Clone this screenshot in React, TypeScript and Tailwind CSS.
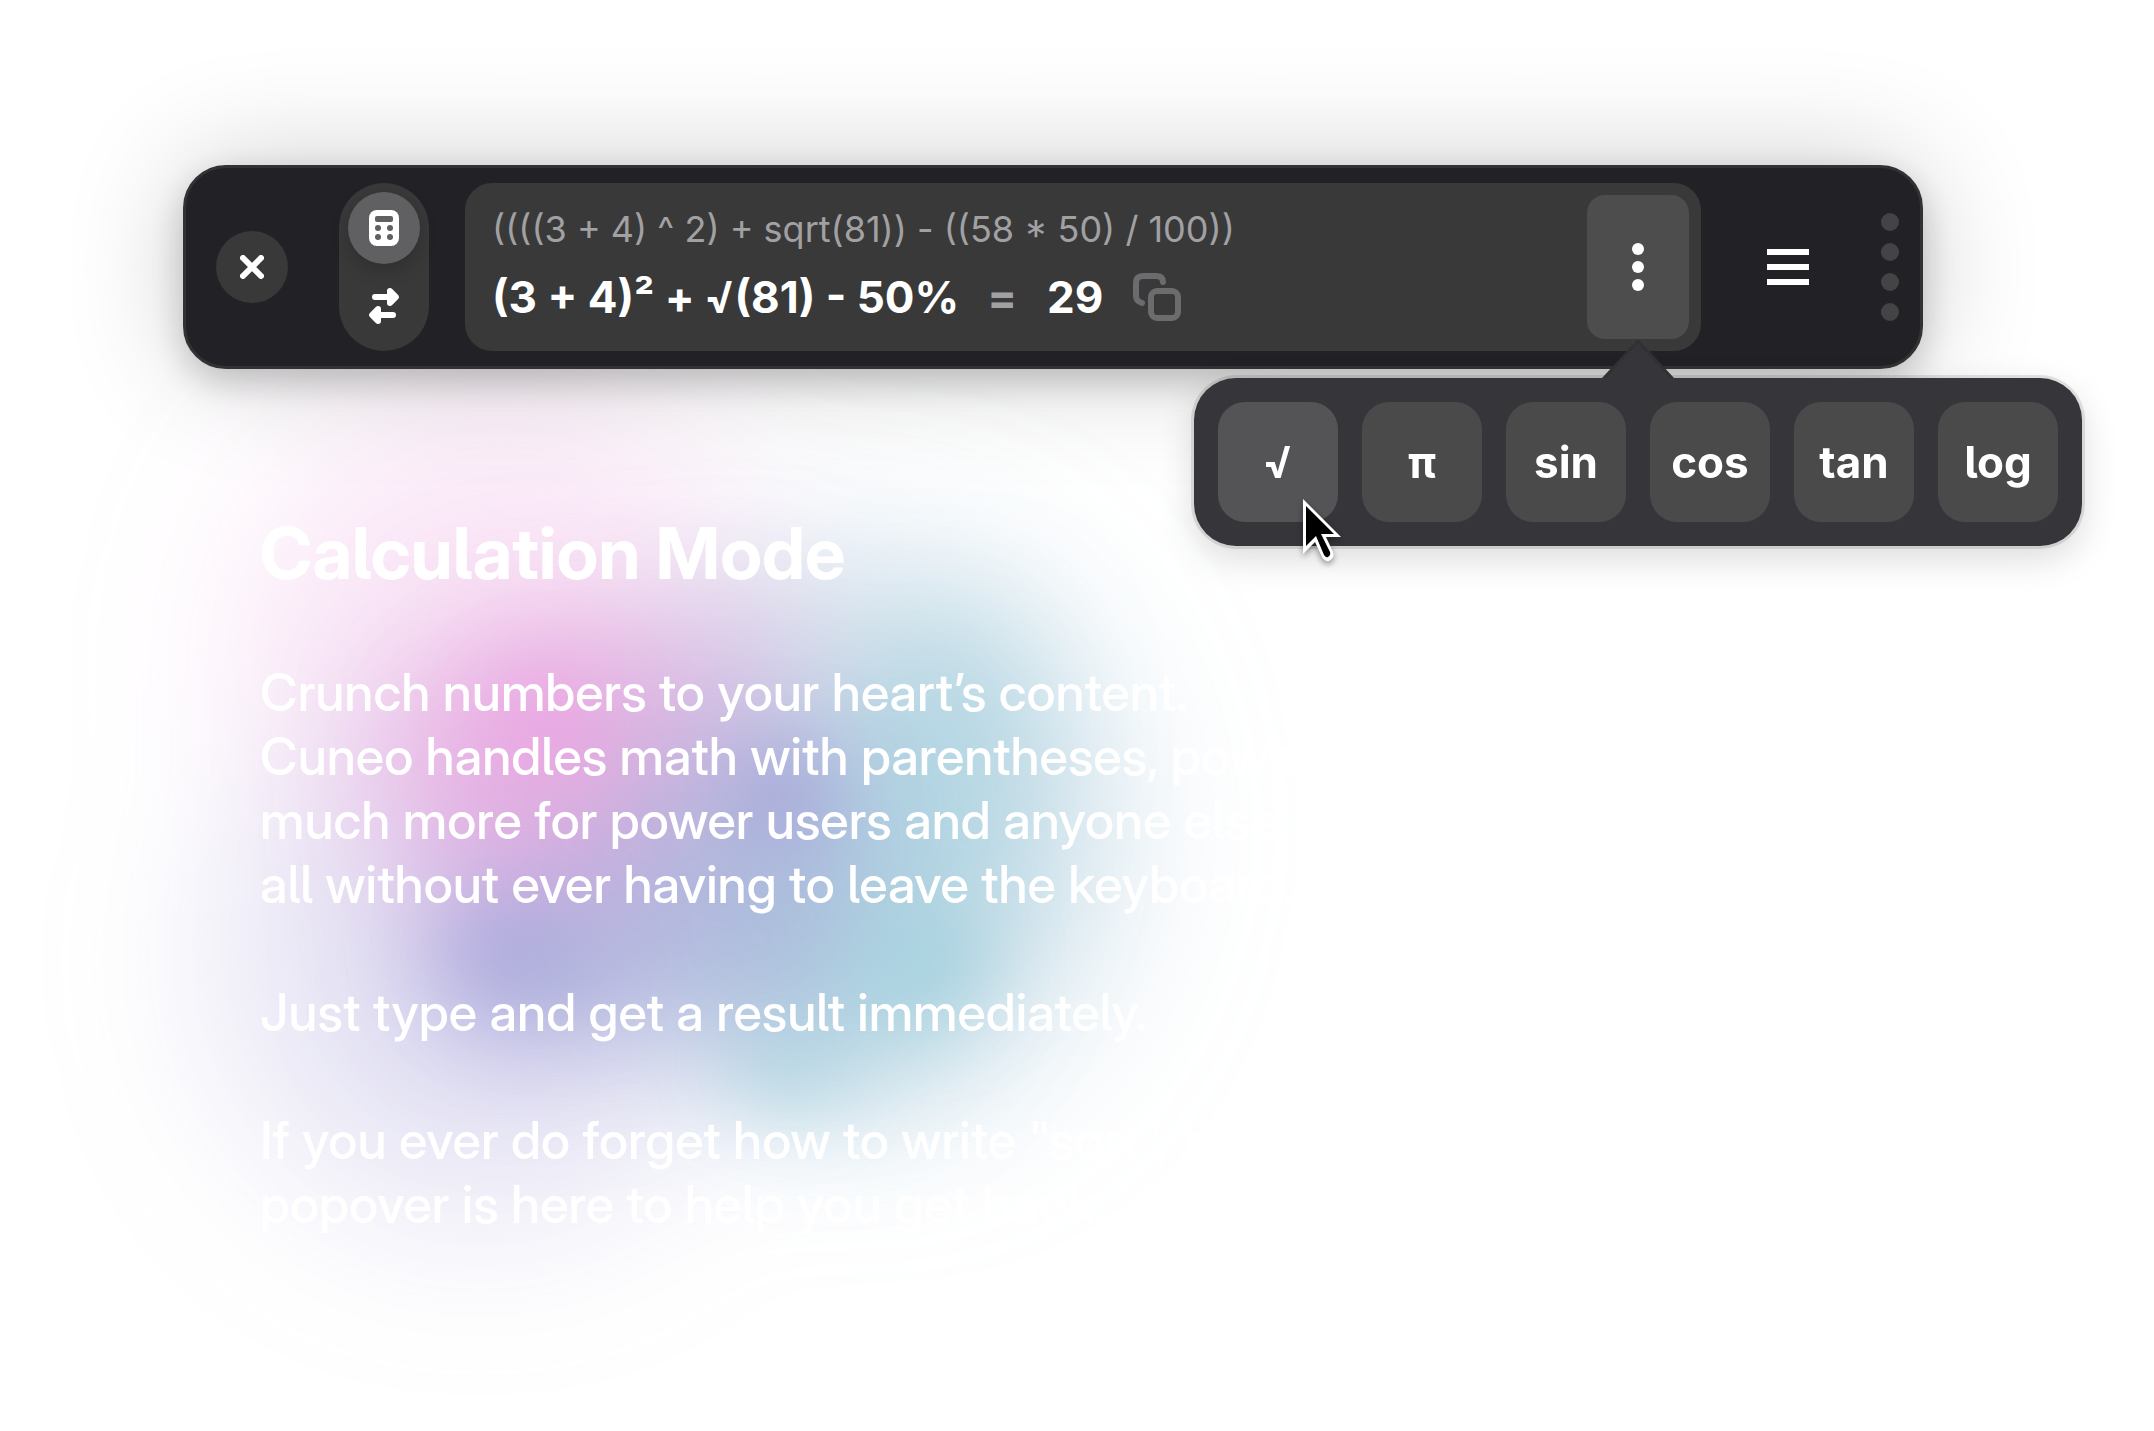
import React from "react";

const functions = [
  { label: "√", name: "Square root" },
  { label: "π", name: "Pi" },
  { label: "sin", name: "Sine" },
  { label: "cos", name: "Cosine" },
  { label: "tan", name: "Tangent" },
  { label: "log", name: "Logarithm" },
];

function CloseIcon() {
  return (
    <svg width="24" height="24" viewBox="0 0 24 24" aria-hidden="true">
      <path d="M3 3L21 21M21 3L3 21" stroke="#fff" strokeWidth="6" strokeLinecap="round" />
    </svg>
  );
}

function CalculatorIcon() {
  return (
    <svg width="30" height="36" viewBox="0 0 30 36" aria-hidden="true">
      <rect width="30" height="36" rx="8" fill="#fff" />
      <g fill="#606062">
        <rect x="6" y="6" width="18" height="6" rx="2" />
        <circle cx="9" cy="18" r="3" />
        <circle cx="21" cy="18" r="3" />
        <circle cx="9" cy="27" r="3" />
        <circle cx="21" cy="27" r="3" />
      </g>
    </svg>
  );
}

function ConvertIcon() {
  return (
    <svg width="30" height="36" viewBox="0 0 30 36" fill="#fff" aria-hidden="true">
      <path d="M6 6H18V3Q18 0 21 0Q22.300 0 23.200 .9L29.100 6.900Q30.900 9 29.100 11.100L23.200 17.100Q22.300 18 21 18Q18 18 18 15V12H6Q3 12 3 9Q3 6 6 6Z" />
      <path d="M24 24H12V21Q12 18 9 18Q7.700 18 6.800 18.900L.9 24.900Q-.9 27 .9 29.100L6.800 35.100Q7.700 36 9 36Q12 36 12 33V30H24Q27 30 27 27Q27 24 24 24Z" />
    </svg>
  );
}

function CopyIcon() {
  return (
    <svg width="48" height="48" viewBox="0 0 48 48" fill="none" stroke="#6c6c6e" strokeWidth="6" aria-hidden="true">
      <rect x="18" y="18" width="27" height="27" rx="6" />
      <path d="M9 30Q3 28 3 23V10Q3 3 10 3H23Q30 3 30 9" strokeLinecap="round" />
    </svg>
  );
}

function MenuIcon() {
  return (
    <svg width="42" height="36" viewBox="0 0 42 36" fill="#fff" aria-hidden="true">
      <path d="M0 0H42V6H0ZM0 15H42V21H0ZM0 30H42V36H0Z" />
    </svg>
  );
}

function Cursor() {
  return (
    <svg
      className="pointer-events-none absolute top-[114px] left-[105px] z-10 drop-shadow-[0_3px_3px_rgba(0,0,0,0.4)]"
      width="44"
      height="74"
      viewBox="0 0 44 74"
      aria-hidden="true"
    >
      <path d="M4 7V62L16 50L23 65Q26 70 30 69Q36 66 34 60L27 45H42Z" fill="#fff" />
      <path d="M7 14V54L17 44L25 63Q27 66 29 65Q32 63 31 60L22 42H35Z" fill="#000" />
    </svg>
  );
}

function Glow() {
  return (
    <svg
      className="absolute top-0 left-0"
      width="1400"
      height="1431"
      viewBox="0 0 1400 1431"
      aria-hidden="true"
    >
      <defs>
        <filter id="wide" x="-50%" y="-50%" width="200%" height="200%">
          <feGaussianBlur stdDeviation="80" />
        </filter>
        <filter id="soft" x="-60%" y="-60%" width="220%" height="220%">
          <feGaussianBlur stdDeviation="62" />
        </filter>
        <filter id="core" x="-80%" y="-80%" width="260%" height="260%">
          <feGaussianBlur stdDeviation="38" />
        </filter>
      </defs>
      <g filter="url(#wide)">
        <ellipse cx="500" cy="650" rx="260" ry="250" fill="#f0aee4" opacity="0.3" />
        <ellipse cx="480" cy="960" rx="270" ry="270" fill="#aca6dc" opacity="0.28" />
        <ellipse cx="860" cy="830" rx="260" ry="280" fill="#a2c6da" opacity="0.48" />
      </g>
      <g filter="url(#soft)">
        <ellipse cx="560" cy="760" rx="170" ry="150" fill="#e79bdc" opacity="0.65" />
        <ellipse cx="890" cy="860" rx="120" ry="250" transform="rotate(20 890 860)" fill="#9ccbdc" opacity="0.62" />
        <ellipse cx="530" cy="960" rx="130" ry="100" fill="#a09cd8" opacity="0.6" />
        <ellipse cx="730" cy="880" rx="130" ry="160" fill="#a6b0d8" opacity="0.7" />
        <ellipse cx="735" cy="680" rx="80" ry="90" fill="#d8b8e4" opacity="0.55" />
      </g>
      <g filter="url(#core)">
        <circle cx="545" cy="725" r="50" fill="#eca0e2" opacity="0.7" />
        <circle cx="785" cy="795" r="55" fill="#a4a2d8" opacity="0.7" />
        <circle cx="505" cy="955" r="55" fill="#a3a3d8" opacity="0.6" />
        <circle cx="570" cy="970" r="45" fill="#a3b0d6" opacity="0.5" />
        <ellipse cx="920" cy="965" rx="65" ry="55" fill="#a4d1df" opacity="0.8" />
        <ellipse cx="785" cy="1065" rx="50" ry="40" fill="#a4d1df" opacity="0.6" />
      </g>
    </svg>
  );
}

function Popover() {
  return (
    <div className="absolute top-[183px] right-[-393px] flex gap-6 rounded-[42px] bg-[#36353a] p-6 shadow-[0_0_0_3px_rgba(0,0,0,0.1),0_12px_36px_rgba(0,0,0,0.15)]">
      <div className="absolute top-[-39px] left-[408px] h-[39px] w-[72px]">
        <svg width="72" height="39" viewBox="0 0 72 39" aria-hidden="true">
          <path d="M0 39L36 0L72 39Z" fill="#313133" />
          <path d="M4 39L36 4L68 39Z" fill="#36353a" />
        </svg>
      </div>
      {functions.map((fn, i) => (
        <button
          key={fn.label}
          type="button"
          aria-label={fn.name}
          className={
            i === 0
              ? "size-[120px] rounded-[27px] bg-[#545456] text-[44px] font-bold text-white"
              : "size-[120px] rounded-[27px] bg-[#4a4a4b] text-[44px] font-bold text-white"
          }
        >
          {fn.label}
        </button>
      ))}
      <Cursor />
    </div>
  );
}

function Toolbar() {
  return (
    <header className="relative z-10 flex items-center rounded-[43px] border-3 border-[#323233] bg-[#222125] p-[15px] shadow-[0_0_120px_rgba(0,0,0,0.2),0_12px_36px_rgba(0,0,0,0.2)]">
      <button
        type="button"
        aria-label="Close"
        className="ml-[15px] flex size-[72px] items-center justify-center rounded-full bg-[#39393a]"
      >
        <CloseIcon />
      </button>

      <div className="ml-[51px] flex flex-col gap-[9px] rounded-full bg-[#39393a] p-[9px] pb-3">
        <button
          type="button"
          aria-label="Calculate"
          className="flex size-[72px] items-center justify-center rounded-full bg-[#606062] shadow-[0_6px_18px_rgba(0,0,0,0.2)]"
        >
          <CalculatorIcon />
        </button>
        <button type="button" aria-label="Convert" className="flex h-[66px] w-[72px] items-center justify-center">
          <ConvertIcon />
        </button>
      </div>

      <section className="ml-9 flex h-[168px] grow items-center justify-between rounded-[27px] bg-[#39393a] pr-3 pl-[27px]">
        <div>
          <p className="text-[36px] leading-[60px] whitespace-nowrap text-[#a1a1a3]">
            ((((3 + 4) ^ 2) + sqrt(81)) - ((58 * 50) / 100))
          </p>
          <div className="flex items-center text-[44px] leading-[76px] font-bold whitespace-nowrap text-white">
            <span>(3 + 4)² + √(81) - 50%</span>
            <span className="ml-7 text-[#a1a1a3]">=</span>
            <output className="ml-[30px]">29</output>
            <button type="button" aria-label="Copy result" className="ml-[30px]">
              <CopyIcon />
            </button>
          </div>
        </div>
        <div className="relative">
          <button
            type="button"
            aria-label="More functions"
            aria-expanded="true"
            className="flex h-[144px] w-[102px] flex-col items-center justify-center gap-1.5 rounded-[18px] bg-[#4d4d4e]"
          >
            <span className="size-3 rounded-full bg-white" />
            <span className="size-3 rounded-full bg-white" />
            <span className="size-3 rounded-full bg-white" />
          </button>
          <Popover />
        </div>
      </section>

      <button type="button" aria-label="Menu" className="ml-[66px]">
        <MenuIcon />
      </button>

      <div className="mr-1.5 ml-[72px] flex flex-col gap-3">
        <span className="size-[18px] rounded-full bg-[#444446]" />
        <span className="size-[18px] rounded-full bg-[#444446]" />
        <span className="size-[18px] rounded-full bg-[#444446]" />
        <span className="size-[18px] rounded-full bg-[#444446]" />
      </div>
    </header>
  );
}

export default function App() {
  return (
    <div className="relative min-h-screen overflow-hidden bg-white pt-[165px] pr-[231px] pl-[183px] font-['Inter',sans-serif] [font-feature-settings:'cv05']">
      <Glow />
      <Toolbar />
      <main className="relative mt-[139px] ml-[77px] font-['Inter_Display','Inter',sans-serif] text-white">
        <h1 className="text-[72px] leading-[90px] font-bold">Calculation Mode</h1>
        <div className="mt-[63px] space-y-16 text-[52px] leading-[64px] font-medium whitespace-nowrap">
          <p>
            Crunch numbers to your heart’s content.
            <br />
            Cuneo handles math with parentheses, powers, and
            <br />
            much more for power users and anyone else,
            <br />
            all without ever having to leave the keyboard.
          </p>
          <p>Just type and get a result immediately.</p>
          <p>
            If you ever do forget how to write "sqrt", the
            <br />
            popover is here to help you get back.
          </p>
        </div>
      </main>
    </div>
  );
}
